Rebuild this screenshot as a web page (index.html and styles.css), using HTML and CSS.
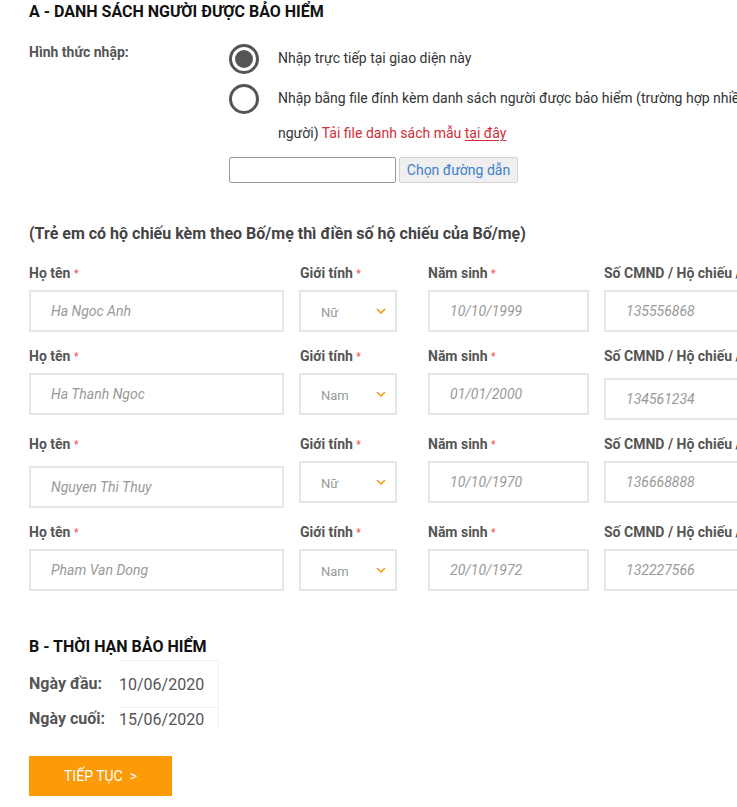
FILE: index.html
```html
<!DOCTYPE html>
<html lang="vi">
<head>
<meta charset="utf-8">
<title>Danh sách người được bảo hiểm</title>
<link rel="stylesheet" href="styles.css">
</head>
<body>
<div class="page">
  <h2 class="sec-title">A - DANH SÁCH NGƯỜI ĐƯỢC BẢO HIỂM</h2>

  <div class="method">
    <div class="method-label">Hình thức nhập:</div>
    <div class="method-options">
      <div class="opt">
        <svg class="radio" width="30" height="30" viewBox="0 0 30 30"><circle cx="15" cy="15" r="13.5" fill="none" stroke="#555" stroke-width="3"/><circle cx="15" cy="15" r="9" fill="#555"/></svg>
        <div class="opt-text">Nhập trực tiếp tại giao diện này</div>
      </div>
      <div class="opt">
        <svg class="radio" width="30" height="30" viewBox="0 0 30 30"><circle cx="15" cy="15" r="13.5" fill="none" stroke="#555" stroke-width="3"/></svg>
        <div class="opt-text"><span class="nowrap">Nhập bằng file đính kèm danh sách người được bảo hiểm (trường hợp nhiều</span><br>người) <span class="red">Tải file danh sách mẫu <u>tại đây</u></span></div>
      </div>
      <div class="file-row">
        <div class="file-box"></div>
        <div class="file-btn">Chọn đường dẫn</div>
      </div>
    </div>
  </div>

  <h3 class="note">(Trẻ em có hộ chiếu kèm theo Bố/mẹ thì điền số hộ chiếu của Bố/mẹ)</h3>

  <div class="person">
    <div class="col c-name"><div class="lbl">Họ tên <span class="req">*</span></div><div class="inp">Ha Ngoc Anh</div></div>
    <div class="col c-sex"><div class="lbl">Giới tính <span class="req">*</span></div><div class="sel"><span>Nữ</span><svg width="10" height="6" viewBox="0 0 10 6"><path d="M1 1l4 4 4-4" fill="none" stroke="#f7941d" stroke-width="1.6"/></svg></div></div>
    <div class="col c-dob"><div class="lbl">Năm sinh <span class="req">*</span></div><div class="inp">10/10/1999</div></div>
    <div class="col c-id"><div class="lbl">Số CMND / Hộ chiếu / CCCD <span class="req">*</span></div><div class="inp">135556868</div></div>
  </div>

  <div class="person">
    <div class="col c-name"><div class="lbl">Họ tên <span class="req">*</span></div><div class="inp">Ha Thanh Ngoc</div></div>
    <div class="col c-sex"><div class="lbl">Giới tính <span class="req">*</span></div><div class="sel"><span>Nam</span><svg width="10" height="6" viewBox="0 0 10 6"><path d="M1 1l4 4 4-4" fill="none" stroke="#f7941d" stroke-width="1.6"/></svg></div></div>
    <div class="col c-dob"><div class="lbl">Năm sinh <span class="req">*</span></div><div class="inp">01/01/2000</div></div>
    <div class="col c-id"><div class="lbl">Số CMND / Hộ chiếu / CCCD <span class="req">*</span></div><div class="inp off">134561234</div></div>
  </div>

  <div class="person">
    <div class="col c-name"><div class="lbl">Họ tên <span class="req">*</span></div><div class="inp off">Nguyen Thi Thuy</div></div>
    <div class="col c-sex"><div class="lbl">Giới tính <span class="req">*</span></div><div class="sel"><span>Nữ</span><svg width="10" height="6" viewBox="0 0 10 6"><path d="M1 1l4 4 4-4" fill="none" stroke="#f7941d" stroke-width="1.6"/></svg></div></div>
    <div class="col c-dob"><div class="lbl">Năm sinh <span class="req">*</span></div><div class="inp">10/10/1970</div></div>
    <div class="col c-id"><div class="lbl">Số CMND / Hộ chiếu / CCCD <span class="req">*</span></div><div class="inp">136668888</div></div>
  </div>

  <div class="person">
    <div class="col c-name"><div class="lbl">Họ tên <span class="req">*</span></div><div class="inp">Pham Van Dong</div></div>
    <div class="col c-sex"><div class="lbl">Giới tính <span class="req">*</span></div><div class="sel"><span>Nam</span><svg width="10" height="6" viewBox="0 0 10 6"><path d="M1 1l4 4 4-4" fill="none" stroke="#f7941d" stroke-width="1.6"/></svg></div></div>
    <div class="col c-dob"><div class="lbl">Năm sinh <span class="req">*</span></div><div class="inp">20/10/1972</div></div>
    <div class="col c-id"><div class="lbl">Số CMND / Hộ chiếu / CCCD <span class="req">*</span></div><div class="inp">132227566</div></div>
  </div>

  <h2 class="sec-title sec-b">B - THỜI HẠN BẢO HIỂM</h2>
  <div class="period">
    <div class="p-lbl p-r1">Ngày đầu:</div><div class="p-val p-r1">10/06/2020</div>
    <div class="p-lbl p-r2">Ngày cuối:</div><div class="p-val p-r2">15/06/2020</div>
  </div>

  <div class="btn">TIẾP TỤC &nbsp;&gt;</div>
</div>
</body>
</html>
```
FILE: styles.css
```css
html, body {
  margin: 0;
  padding: 0;
  background: #fff;
  overflow: hidden;
}
body {
  font-family: Roboto, "Noto Sans", Arial, sans-serif;
  color: #333;
}
.page {
  width: 900px;
  padding: 2px 0 0 29px;
}
.sec-title {
  margin: 0;
  font-size: 16px;
  line-height: 20px;
  font-weight: 700;
  color: #111;
}
.method {
  display: flex;
  margin-top: 19px;
}
.method-label {
  width: 200px;
  flex: none;
  font-size: 14px;
  font-weight: 700;
  color: #555;
  line-height: 20px;
  padding-top: 1px;
}
.method-options {
  display: flex;
  flex-direction: column;
  gap: 5px;
}
.opt {
  display: flex;
  align-items: flex-start;
  gap: 19px;
}
.radio {
  flex: none;
  margin-top: 3px;
}
.opt-text {
  font-size: 14px;
  line-height: 35px;
  color: #333;
}
.nowrap { white-space: nowrap; }
.red { color: #cf2e36; }
.red u { text-decoration-thickness: 1px; text-underline-offset: 2px; }
.file-row {
  display: flex;
  gap: 3px;
  margin-top: 1px;
}
.file-box {
  width: 165px;
  height: 24px;
  border: 1px solid #999;
  border-radius: 2px;
}
.file-btn {
  width: 117px;
  height: 24px;
  border: 1px solid #d4d4d4;
  border-radius: 2px;
  background: #efefef;
  color: #3f7fcc;
  font-size: 14px;
  line-height: 24px;
  text-align: center;
}
.note {
  margin: 41px 0 0;
  font-size: 16px;
  line-height: 20px;
  font-weight: 700;
  color: #444;
}
.person {
  display: flex;
  align-items: flex-start;
  margin-top: 21px;
}
.person + .person { margin-top: 16px; }
.col { display: flex; flex-direction: column; flex: none; }
.c-name { width: 255px; }
.c-sex { width: 98px; margin-left: 15px; }
.c-dob { width: 161px; margin-left: 31px; }
.c-id { width: 170px; margin-left: 15px; }
.lbl {
  font-size: 14px;
  line-height: 17px;
  font-weight: 700;
  color: #555;
  white-space: nowrap;
}
.c-sex .lbl { padding-left: 1px; }
.req {
  color: #f25a5a;
  font-size: 10px;
  vertical-align: 1px;
}
.inp, .sel {
  box-sizing: border-box;
  height: 42px;
  margin-top: 8px;
  border: 2px solid #e6e6e6;
  padding-left: 20px;
  display: flex;
  align-items: center;
  color: #999;
}
.inp {
  font-style: italic;
  font-size: 14px;
}
.inp.off { margin-top: 13px; }
.sel {
  font-size: 13px;
  justify-content: space-between;
  padding-right: 9px;
}
.sel span { padding-top: 2px; }
.sec-b { margin-top: 46px; }
.period {
  display: grid;
  grid-template-columns: 89px 101px;
  margin-top: 3px;
}
.p-lbl {
  font-size: 16px;
  font-weight: 700;
  color: #555;
  display: flex;
  align-items: center;
  white-space: nowrap;
}
.p-val {
  font-size: 16px;
  color: #555;
  display: flex;
  align-items: center;
  padding-left: 1px;
  border-top: 1px solid #efefef;
  border-right: 1px solid #f2f2f2;
}
.p-r1 { height: 46px; }
.p-r2 { height: 22px; }
.btn {
  margin-top: 26px;
  width: 143px;
  height: 40px;
  background: #fc9a08;
  color: #fff;
  font-size: 14px;
  line-height: 40px;
  text-align: center;
}
```
